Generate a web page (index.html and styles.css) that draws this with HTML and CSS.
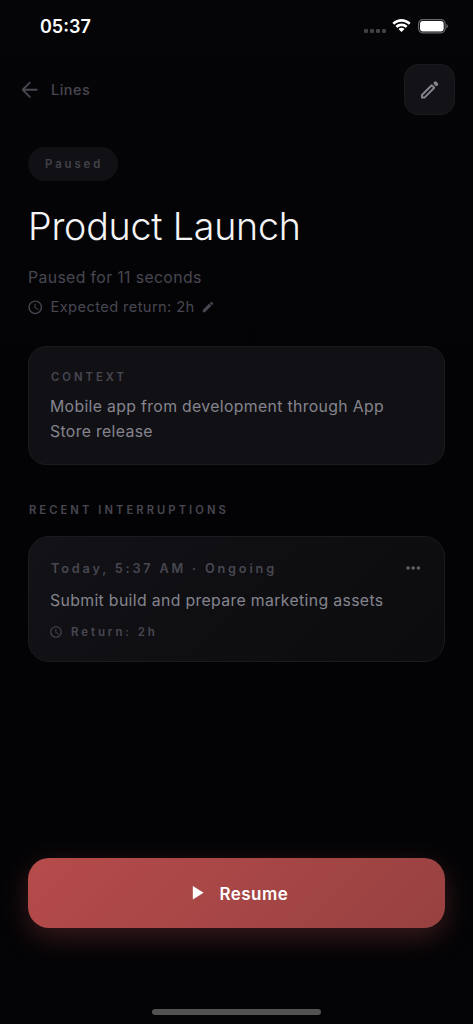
FILE: index.html
```html
<!DOCTYPE html>
<html lang="en">
<head>
<meta charset="utf-8">
<meta name="viewport" content="width=device-width, initial-scale=1">
<title>Product Launch</title>
<link rel="stylesheet" href="styles.css">
</head>
<body>
<div class="screen">
  <div class="status">
    <span class="time">05:37</span>
    <div class="signals">
      <span class="cell"><i></i><i></i><i></i><i></i></span>
      <svg class="wifi" viewBox="0 0 19 14">
        <path d="M9.5 2.8c2.6 0 5 1 6.9 2.8.2.1.4.1.5 0l1.4-1.4c.2-.2.2-.4 0-.6C13.4-1.1 5.600-1.100.7 3.600c-.2.2-.2.4 0 .6l1.400 1.400c.1.1.3.1.5 0C4.500 3.800 6.900 2.800 9.500 2.800z"/>
        <path d="M9.500 7.200c1.400 0 2.800.5 3.900 1.500.1.1.4.1.5 0l1.400-1.400c.2-.2.2-.4 0-.6-3.300-3-8.300-3-11.600 0-.2.2-.2.4 0 .6l1.400 1.400c.1.1.4.1.5 0 1.100-1 2.500-1.500 3.900-1.500z"/>
        <path d="M12.300 10.300c.2-.2.2-.4 0-.6-1.600-1.400-4-1.400-5.600 0-.2.2-.2.4 0 .6l2.500 2.500c.2.2.4.2.6 0z"/>
      </svg>
      <svg class="battery" viewBox="0 0 31 15">
        <rect class="shell" x="0.6" y="0.6" width="26.500" height="13.200" rx="4.200"/>
        <rect class="level" x="2" y="2" width="23.700" height="10.400" rx="2.900"/>
        <path class="tip" d="M28.400 5v4.500c1.900-.7 1.900-3.800 0-4.500z"/>
      </svg>
    </div>
  </div>
  <header class="nav">
    <a class="back">
      <svg class="icon-lg" viewBox="0 0 24 24"><path d="M19.200 12H5M12 4.800 4.800 12l7.200 7.200" fill="none" stroke="currentColor" stroke-width="1.900" stroke-linecap="round" stroke-linejoin="round"/></svg>
      <span class="back-label">Lines</span>
    </a>
    <button class="edit-button" aria-label="Edit">
      <svg class="icon-lg" viewBox="0 0 24 24" fill="none" stroke="currentColor" stroke-linecap="round" stroke-linejoin="round"><path stroke-width="2" d="M4 17.400V20h2.600L16.600 10 14 7.400z"/><path stroke-width="3.600" d="M17.700 5.200l1.100 1.100"/></svg>
    </button>
  </header>
  <main class="content">
    <span class="pill">Paused</span>
    <h1 class="title">Product Launch</h1>
    <p class="since">Paused for 11 seconds</p>
    <div class="expected">
      <svg class="icon-md" viewBox="0 0 24 24"><path fill="currentColor" d="M11.990 2C6.470 2 2 6.480 2 12s4.470 10 9.990 10C17.520 22 22 17.520 22 12S17.520 2 11.990 2zM12 20c-4.420 0-8-3.580-8-8s3.580-8 8-8 8 3.580 8 8-3.580 8-8 8zm.500-13H11v6l5.250 3.150.750-1.230-4.500-2.670z"/></svg>
      <span class="expected-label">Expected return: 2h</span>
      <svg class="icon-sm" viewBox="0 0 24 24"><path fill="currentColor" d="M3 17.250V21h3.750L17.810 9.940l-3.750-3.750L3 17.250zM20.710 7.040c.390-.390.390-1.020 0-1.410l-2.340-2.340c-.390-.390-1.020-.390-1.410 0l-1.830 1.830 3.750 3.750 1.830-1.830z"/></svg>
    </div>
    <section class="card context">
      <h2 class="overline">CONTEXT</h2>
      <p class="body">Mobile app from development through App Store release</p>
    </section>
    <h2 class="overline section">RECENT INTERRUPTIONS</h2>
    <section class="card entry">
      <div class="entry-head">
        <span class="when">Today, 5:37 AM · Ongoing</span>
        <svg class="more" viewBox="0 0 15 4"><circle cx="2" cy="2" r="1.800"/><circle cx="7.200" cy="2" r="1.800"/><circle cx="12.400" cy="2" r="1.800"/></svg>
      </div>
      <p class="note">Submit build and prepare marketing assets</p>
      <div class="return">
        <svg class="icon-sm" viewBox="0 0 24 24"><path fill="currentColor" d="M11.990 2C6.470 2 2 6.480 2 12s4.470 10 9.990 10C17.520 22 22 17.520 22 12S17.520 2 11.990 2zM12 20c-4.420 0-8-3.580-8-8s3.580-8 8-8 8 3.580 8 8-3.580 8-8 8zm.500-13H11v6l5.250 3.150.750-1.230-4.500-2.670z"/></svg>
        <span class="return-label">Return: 2h</span>
      </div>
    </section>
  </main>
  <footer class="footer">
    <button class="resume">
      <svg class="icon-lg" viewBox="0 0 24 24"><path fill="currentColor" d="M8 5v14l11-7z"/></svg>
      <span class="resume-label">Resume</span>
    </button>
    <div class="home"></div>
  </footer>
</div>
</body>
</html>
```
FILE: styles.css
```css
* { box-sizing: border-box; margin: 0; padding: 0; }
body { background: #030305; font-family: Inter, "Liberation Sans", sans-serif; -webkit-font-smoothing: antialiased; }
button { border: 0; font: inherit; }
svg { display: block; flex: none; }
span, p, h1, h2 { white-space: nowrap; }
.screen { width: 473px; height: 1024px; overflow: hidden; display: flex; flex-direction: column; background: linear-gradient(180deg, #050508 0%, #030305 50%, #040406 100%); color: #484751; }
.icon-lg { width: 23.500px; height: 23.500px; }
.icon-md { width: 16.500px; height: 16.500px; }
.icon-sm { width: 14px; height: 14px; }

.status { height: 64px; padding: 0 24px 12px 40px; display: flex; align-items: center; justify-content: space-between; }
.time { color: #fff; font-size: 18px; font-weight: 600; letter-spacing: 0; }
.signals { display: flex; align-items: center; }
.cell { display: flex; gap: 1.900px; margin-top: 9px; margin-right: 6px; }
.cell i { width: 4px; height: 4px; border-radius: 1.300px; background: #414144; }
.wifi { width: 19px; height: 14px; fill: #fff; margin-right: 7px; }
.battery { width: 31px; height: 15px; }
.shell { fill: none; stroke: #68686b; stroke-width: 1.200; }
.level { fill: #fff; }
.tip { fill: #68686b; }

.nav { height: 51px; padding: 0 18px 0 18px; display: flex; align-items: center; justify-content: space-between; }
.back { display: flex; align-items: center; gap: 9.500px; }
.back-label { font-size: 14.400px; font-weight: 450; letter-spacing: 0.550px; }
.edit-button { width: 51px; height: 51px; border-radius: 14px; border: 1px solid #1a1a1e; background: #121217; color: #85848e; display: flex; align-items: center; justify-content: center; }

.content { flex: 1; padding: 32px 28px 0; display: flex; flex-direction: column; align-items: flex-start; }
.pill { height: 34px; line-height: 35px; padding-left: 17px; width: 90px; border-radius: 17px; background: #111115; font-size: 11.400px; font-weight: 600; letter-spacing: 2.900px; color: #414149; }
.title { margin-top: 21px; height: 50px; line-height: 50px; font-size: 37.600px; font-weight: 300; letter-spacing: -0.200px; color: #f4f4f6; }
.since { margin-top: 16px; height: 20px; line-height: 20px; font-size: 15.800px; letter-spacing: 0.370px; }
.expected { margin-top: 9px; height: 20px; display: flex; align-items: center; margin-left: -1px; }
.expected-label { margin-left: 7px; width: 144px; margin-right: 6px; font-size: 14.700px; letter-spacing: 0.380px; }
.card { width: 417px; border: 1px solid #1b1b1f; }
.overline { font-size: 11.200px; font-weight: 600; letter-spacing: 3.070px; line-height: 16px; }
.context { margin-top: 29px; height: 119px; padding: 22px 21px 0; border-radius: 18px; background: #111115; }
.context .overline { padding-left: 1px; }
.body { margin-top: 9px; white-space: normal; font-size: 15.800px; line-height: 25px; letter-spacing: 0.340px; color: #85848e; }
.section { margin: 37px 0 18px 1px; }
.entry { height: 126px; border-radius: 21px; padding: 21px 23px 0 21px; background: linear-gradient(135deg, #121217, #0c0c0e); }
.entry-head { height: 20px; display: flex; align-items: center; justify-content: space-between; }
.when { padding-left: 1px; font-size: 12.700px; font-weight: 600; letter-spacing: 2.820px; }
.more { width: 15px; height: 4px; fill: #62616b; }
.note { margin-top: 13px; line-height: 20px; font-size: 15.800px; letter-spacing: 0.350px; color: #85848e; }
.return { margin-top: 13px; height: 16px; margin-left: -1px; display: flex; align-items: center; gap: 8px; }
.return-label { font-size: 11.500px; font-weight: 600; letter-spacing: 2.900px; }

.footer { height: 166px; padding: 0 28px; display: flex; flex-direction: column; align-items: center; }
.resume { width: 417px; height: 70px; flex: none; border-radius: 21px; display: flex; align-items: center; padding-left: 156.500px; gap: 11.500px; color: #fff; background: linear-gradient(135deg, #b64b4b, #984141); box-shadow: 0 9px 28px rgba(182, 75, 75, 0.300); }
.resume-label { padding-top: 1px; font-size: 17px; font-weight: 560; letter-spacing: 0.450px; }
.home { margin-top: 81px; width: 169px; height: 6px; border-radius: 3px; background: #525252; }
```
